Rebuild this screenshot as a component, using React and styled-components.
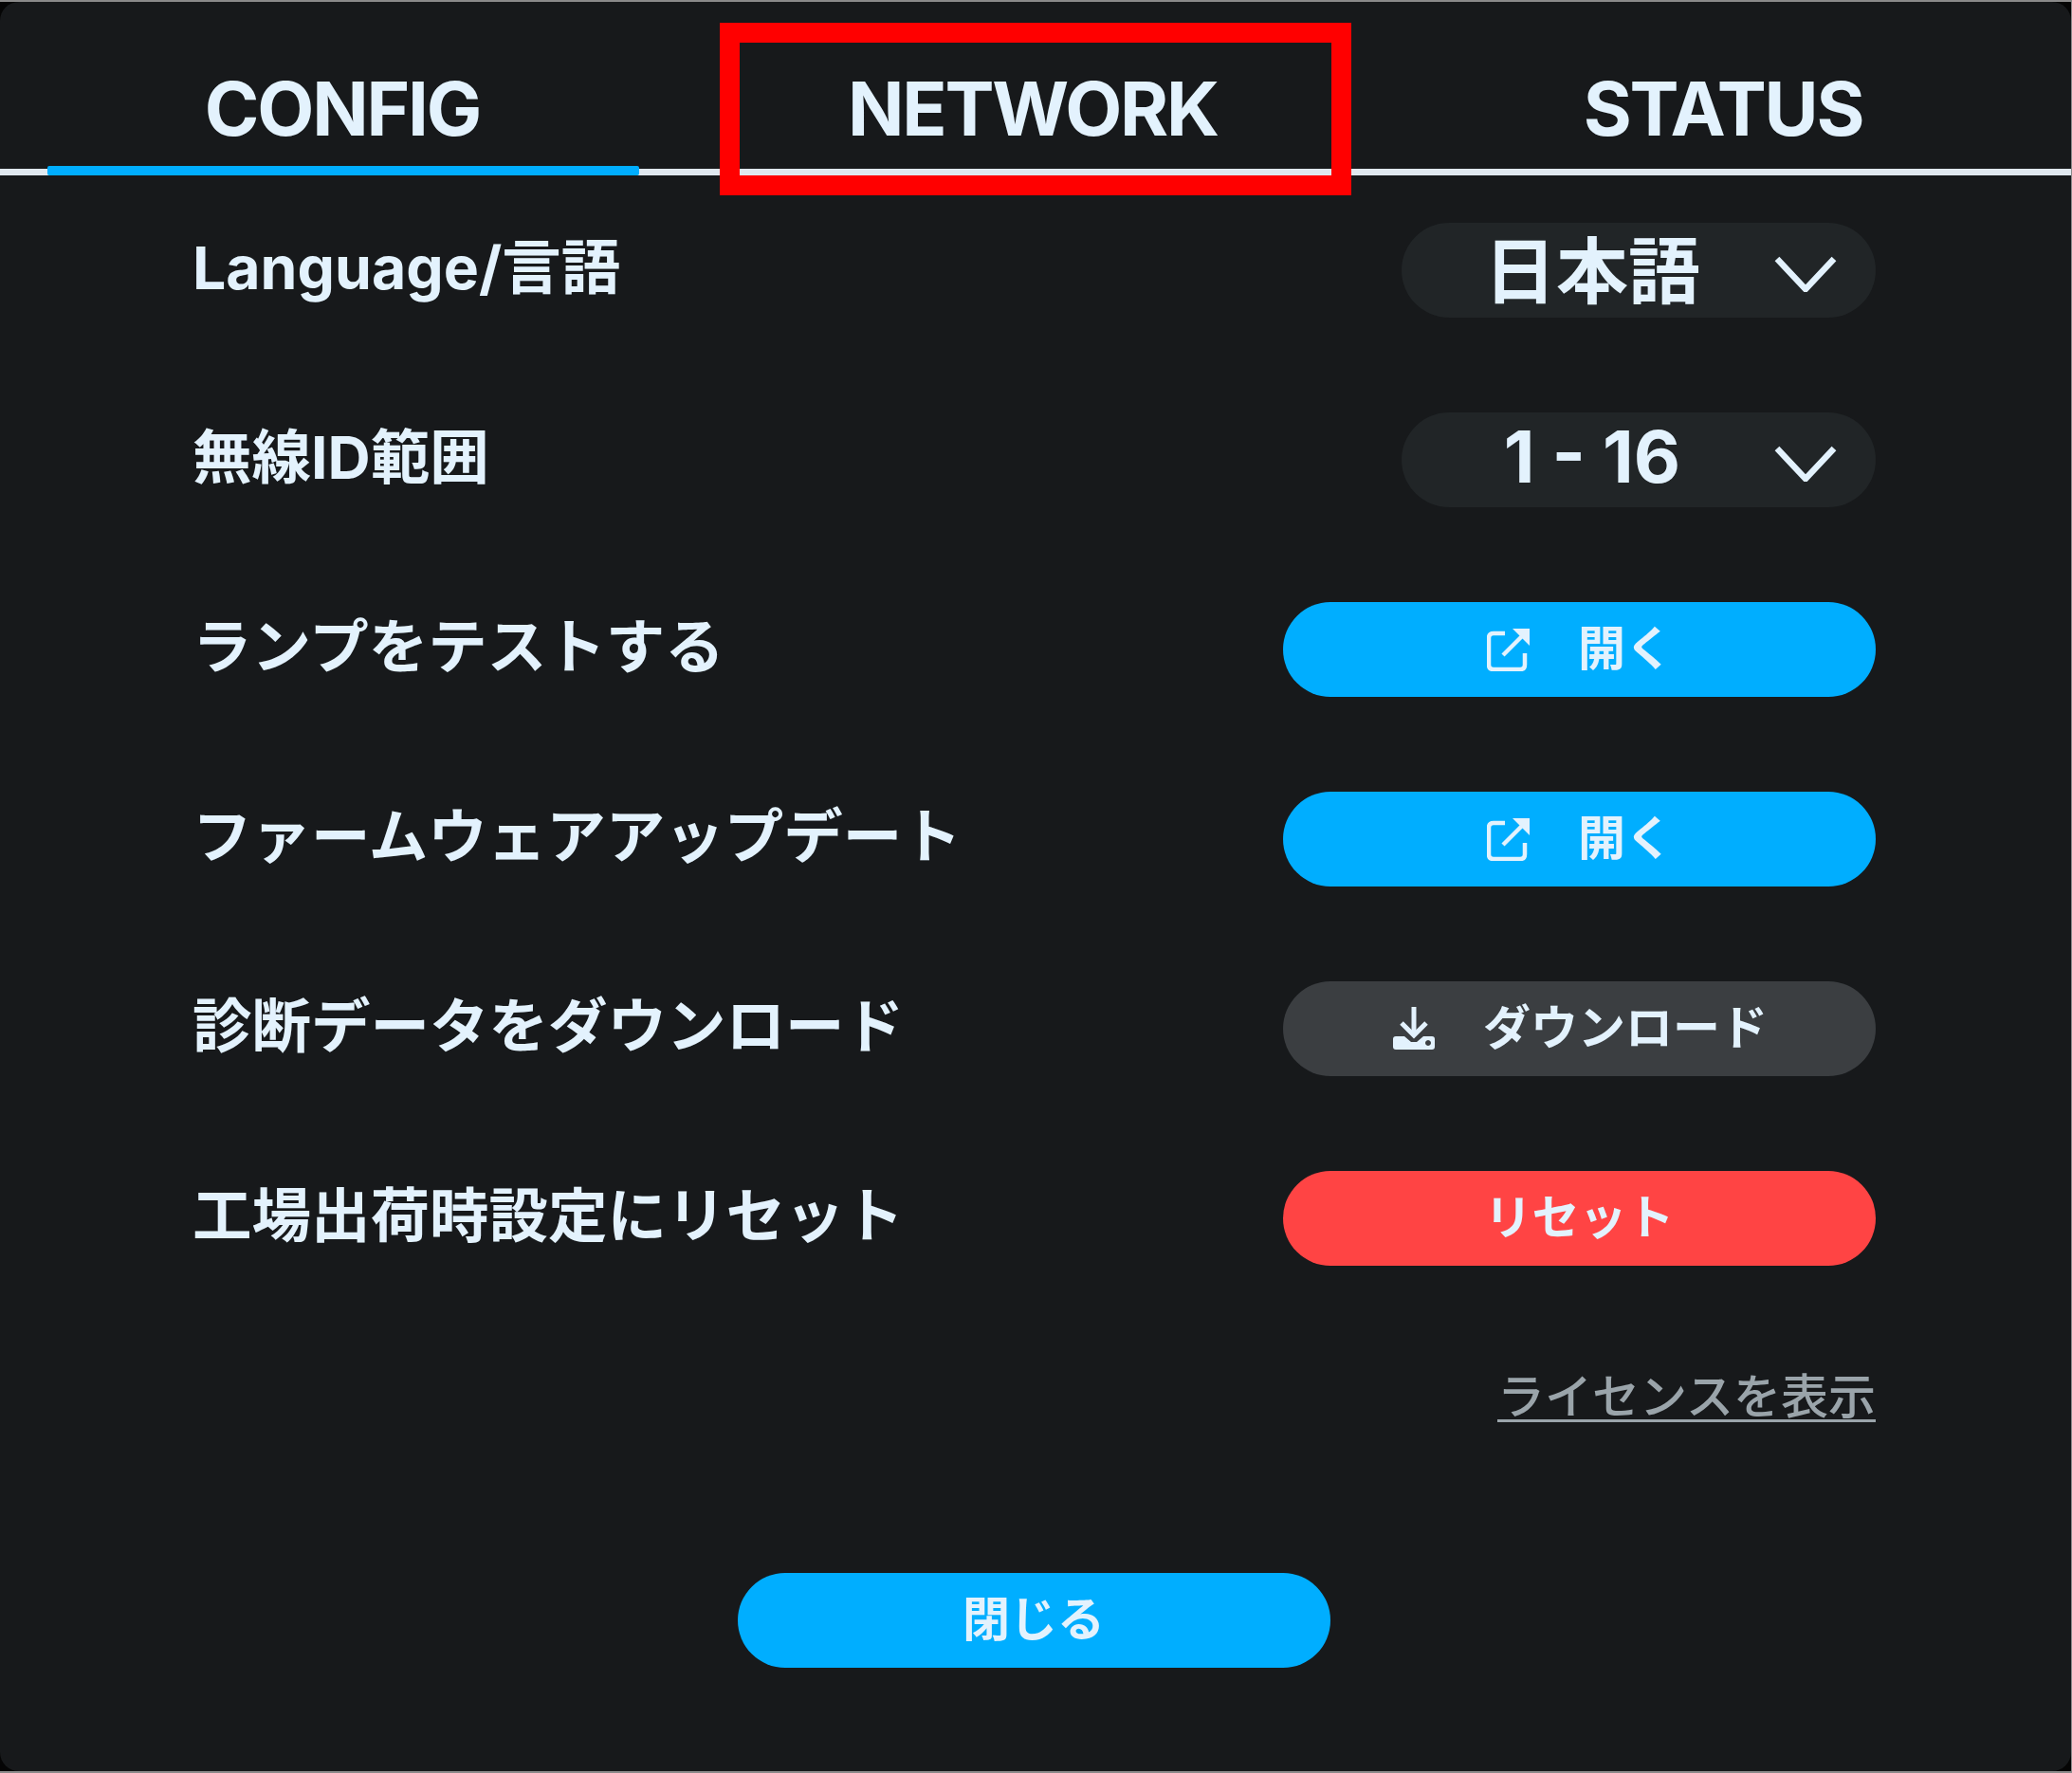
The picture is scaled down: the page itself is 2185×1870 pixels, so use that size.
import React from "react";
import styled, { createGlobalStyle } from "styled-components";

const Global = createGlobalStyle`
  html, body { margin: 0; padding: 0; background: #000; }
  * { box-sizing: border-box; }
`;

const FONT = `Inter, "Noto Sans CJK JP", sans-serif`;

const Page = styled.div`
  width: 2185px;
  height: 1870px;
  background: #050505;
  border-top: 2px solid #8a8a8a;
  border-bottom: 2px solid #8a8a8a;
  border-right: 1px solid #8a8a8a;
  font-family: ${FONT};
  color: #e3f2fd;
`;

const Panel = styled.div`
  height: 100%;
  background: #17191b;
  border-radius: 20px;
  display: flex;
  flex-direction: column;
`;

const Tabs = styled.div`
  display: grid;
  grid-template-columns: repeat(3, 1fr);
  height: 183px;
  border-bottom: 7px solid #e0e8ef;
`;

const Tab = styled.div`
  position: relative;
  display: flex;
  align-items: center;
  justify-content: center;
  padding: 48px 6px 0 0;
  font-size: 78px;
  font-weight: 650;
  letter-spacing: -2.2px;
  &::after {
    content: "";
    display: ${(p) => (p.$active ? "block" : "none")};
    position: absolute;
    left: 50px;
    width: 624px;
    bottom: -7px;
    height: 10px;
    background: #00aeff;
    border-radius: 2px;
  }
`;

const Highlight = styled.div`
  position: absolute;
  left: 31px;
  top: 22px;
  width: 666px;
  height: 182px;
  border: 21px solid #ff0000;
  pointer-events: none;
`;

const Body = styled.div`
  display: flex;
  flex-direction: column;
  gap: 100px;
  padding: 50px 206px 0 203px;
`;

const Row = styled.div`
  display: flex;
  align-items: center;
  justify-content: space-between;
  height: 100px;
`;

const Label = styled.div`
  font-size: 62.5px;
  font-weight: 700;
  line-height: 100px;
  white-space: nowrap;
  padding-bottom: 6px;
`;

const Select = styled.div`
  width: 500px;
  height: 100px;
  border-radius: 50px;
  background: #212527;
  display: flex;
  align-items: center;
  justify-content: center;
  position: relative;
  padding: 0 98px 8px 0;
  font-size: 76px;
  font-weight: 650;
  svg {
    position: absolute;
    right: 41px;
    top: 35px;
  }
`;

const Pill = styled.div`
  width: 625px;
  height: 100px;
  border-radius: 50px;
  background: ${(p) => p.$bg};
  display: flex;
  align-items: center;
  justify-content: center;
  gap: 50px;
  font-size: 50px;
  font-weight: 600;
  padding-bottom: 10px;
  white-space: nowrap;
  svg {
    margin: 10px 0 0 1px;
  }
`;

const LinkRow = styled.div`
  display: flex;
  justify-content: flex-end;
  margin-top: -2px;
`;

const LicenseLink = styled.a`
  font-size: 50px;
  font-weight: 500;
  color: #9aa4aa;
  text-decoration: underline;
  text-decoration-thickness: 3px;
  text-underline-offset: 6px;
`;

const Footer = styled.div`
  display: flex;
  justify-content: center;
  padding-right: 4px;
  margin-top: 154px;
`;

function Chevron() {
  return (
    <svg width="66" height="38" viewBox="0 0 66 38" fill="none">
      <path d="M3 3 L33 35 L63 3" stroke="#e3f2fd" strokeWidth="6.5" />
    </svg>
  );
}

function OpenIcon() {
  return (
    <svg width="46" height="46" viewBox="0 0 46 46" fill="none">
      <path
        d="M19 6 H7 Q2 6 2 11 V39 Q2 44 7 44 H35 Q40 44 40 39 V27"
        stroke="#e3f2fd"
        strokeWidth="4.5"
      />
      <path d="M17 29 L38 8" stroke="#e3f2fd" strokeWidth="4.5" />
      <path d="M27 1 H45 V19 Z" fill="#e3f2fd" />
    </svg>
  );
}

function DownloadIcon() {
  return (
    <svg width="46" height="46" viewBox="0 0 46 46" fill="none">
      <path d="M23 0 V28" stroke="#e3f2fd" strokeWidth="5" />
      <path d="M10 17 L23 30 L36 17" stroke="#e3f2fd" strokeWidth="5" />
      <path
        fillRule="evenodd"
        d="M4 31 H13 L20 37 H26 L33 31 H42 Q45 31 45 34 V42 Q45 45 42 45 H4 Q1 45 1 42 V34 Q1 31 4 31 Z M38 35 a3 3 0 1 0 0.01 0 Z"
        fill="#e3f2fd"
      />
    </svg>
  );
}

export default function App() {
  return (
    <Page>
      <Global />
      <Panel>
        <Tabs>
          <Tab $active>CONFIG</Tab>
          <Tab>
            NETWORK
            <Highlight />
          </Tab>
          <Tab>STATUS</Tab>
        </Tabs>
        <Body>
          <Row>
            <Label>Language/言語</Label>
            <Select>
              日本語
              <Chevron />
            </Select>
          </Row>
          <Row>
            <Label>無線ID範囲</Label>
            <Select>
              1 - 16
              <Chevron />
            </Select>
          </Row>
          <Row>
            <Label>ランプをテストする</Label>
            <Pill $bg="#00aeff">
              <OpenIcon />
              開く
            </Pill>
          </Row>
          <Row>
            <Label>ファームウェアアップデート</Label>
            <Pill $bg="#00aeff">
              <OpenIcon />
              開く
            </Pill>
          </Row>
          <Row>
            <Label>診断データをダウンロード</Label>
            <Pill $bg="#3b3e41">
              <DownloadIcon />
              ダウンロード
            </Pill>
          </Row>
          <Row>
            <Label>工場出荷時設定にリセット</Label>
            <Pill $bg="#ff4444">リセット</Pill>
          </Row>
          <LinkRow>
            <LicenseLink>ライセンスを表示</LicenseLink>
          </LinkRow>
        </Body>
        <Footer>
          <Pill $bg="#00aeff">閉じる</Pill>
        </Footer>
      </Panel>
    </Page>
  );
}
